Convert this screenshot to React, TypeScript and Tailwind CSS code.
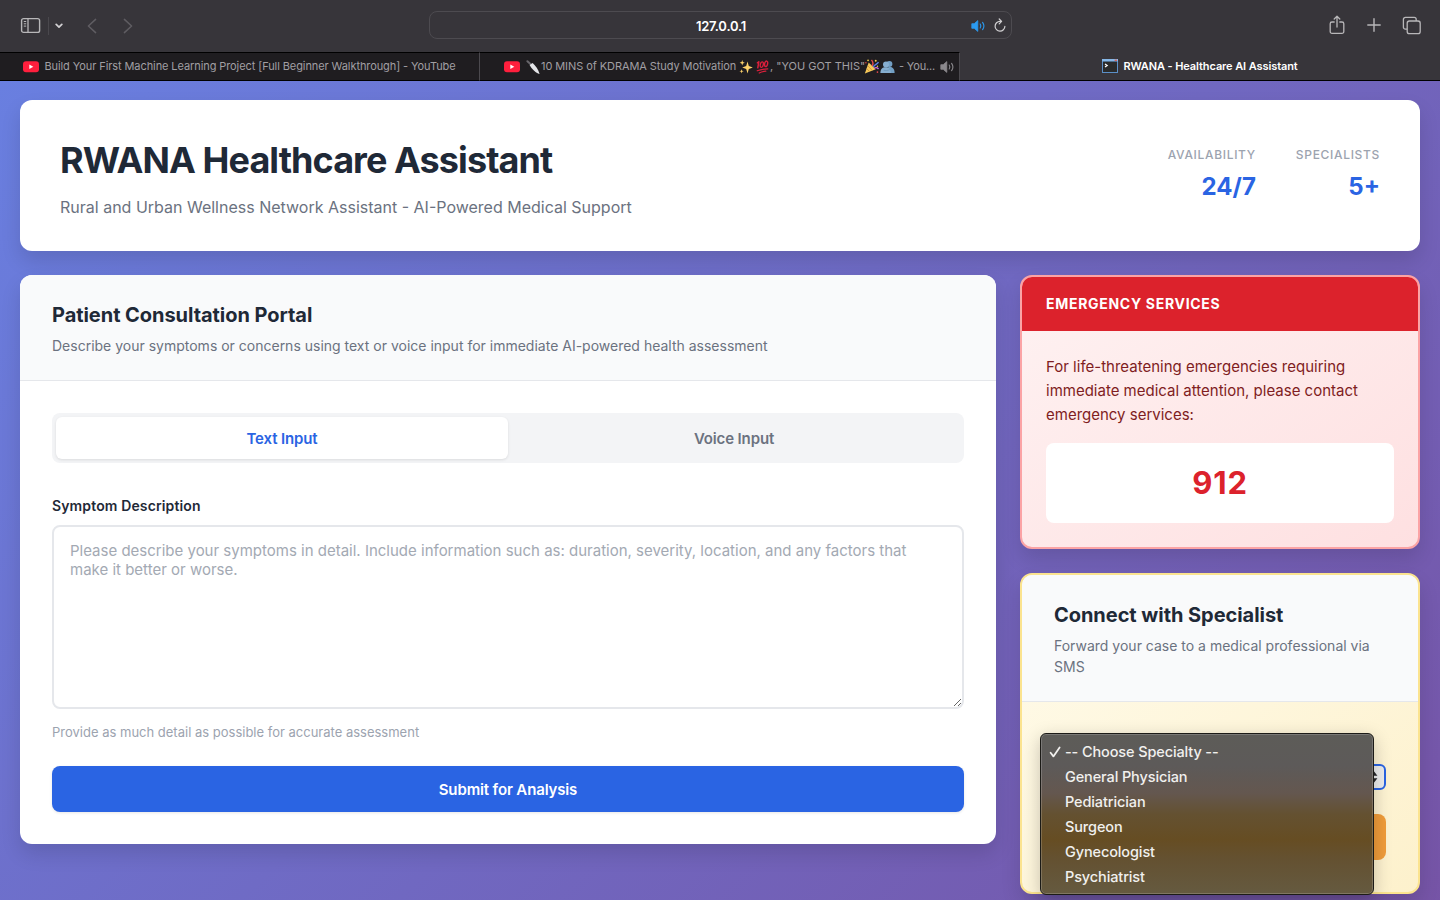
import React from "react";

const specialties = [
  "-- Choose Specialty --",
  "General Physician",
  "Pediatrician",
  "Surgeon",
  "Gynecologist",
  "Psychiatrist",
];

function YouTubeIcon() {
  return (
    <svg width="16" height="12" viewBox="0 0 16 12" className="shrink-0">
      <rect width="16" height="11" y="0.3" rx="3" fill="#ff1f3d" />
      <path d="M6.3 3.6v4.4l4-2.2z" fill="#fff" />
    </svg>
  );
}

function Knife() {
  return (
    <svg width="14" height="14" viewBox="0 0 14 14" className="shrink-0">
      <path d="M1.4 1.2 5 4.6" stroke="#68666b" strokeWidth="2" strokeLinecap="round" />
      <path d="M3.6 5 6.6 3C9.5 5.600 12.400 9.500 13.600 13.900 9.500 13 5.800 9 3.600 5Z" fill="#e4e5e8" />
    </svg>
  );
}

function Sparkles() {
  return (
    <svg width="14" height="14" viewBox="0 0 13 13" className="shrink-0" fill="#fdd26a">
      <path d="M7.9 1.4 9.1 5.6 12.8 7 9.1 8.4 7.9 12.6 6.7 8.4 3 7 6.7 5.6Z" />
      <path d="M3 0 3.6 1.9 5.4 2.6 3.6 3.3 3 5.2 2.4 3.3.6 2.6 2.4 1.9Z" />
      <path d="M2.4 8.6 2.9 10 4.4 10.5 2.9 11 2.4 12.6 1.9 11 .4 10.5 1.9 10Z" />
    </svg>
  );
}

function Hundred() {
  return (
    <svg width="13" height="14" viewBox="0 0 13 14" className="shrink-0" fill="none" stroke="#dc1f3c" strokeLinecap="round">
      <path d="M2.8 1.8 1.8 7.8M1.4 2.8l1.4-1" strokeWidth="1.5" />
      <ellipse cx="5.8" cy="4.6" rx="1.5" ry="2.8" strokeWidth="1.4" transform="rotate(12 5.8 4.6)" />
      <ellipse cx="10.1" cy="3.8" rx="1.5" ry="2.8" strokeWidth="1.4" transform="rotate(12 10.1 3.8)" />
      <path d="M1.2 10.8C4.5 9.4 8 8.8 11.8 8.8M3.2 13c2-1 4.2-1.7 6.6-1.9" strokeWidth="1.2" />
    </svg>
  );
}

function Party() {
  return (
    <svg width="16" height="15" viewBox="0 0 15 14" className="shrink-0">
      <path d="M4.4 3.2 11 9.6 0.8 13.6Z" fill="#f7c95a" />
      <path d="M3.6 6.4 7.6 10.6M2.6 9 5 11.6" stroke="#d0933a" strokeWidth="0.8" />
      <path d="M7.4 6.4C8.8 5 8.4 2.6 7 .8" stroke="#e5484d" strokeWidth="1.3" fill="none" />
      <path d="M8.8 7.4C10 5 12.2 5.2 13.6 3" stroke="#5b7fe8" strokeWidth="1.3" fill="none" />
      <path d="M9.6 8.6c1.4-1 3-.6 4 .8" stroke="#c66be0" strokeWidth="1.2" fill="none" />
      <g fill="#f5d04c">
        <circle cx="11" cy="1.6" r="0.9" />
        <circle cx="3.8" cy="1.2" r="0.8" />
        <circle cx="12.6" cy="6.8" r="0.7" />
      </g>
      <circle cx="12.6" cy="12.2" r="0.8" fill="#e5484d" />
      <circle cx="1.8" cy="3.4" r="0.7" fill="#e5484d" />
    </svg>
  );
}

function Hugging() {
  return (
    <svg width="15" height="14" viewBox="0 0 15 14" className="shrink-0">
      <circle cx="9.4" cy="4" r="3" fill="#729fc4" />
      <path d="M6 13c0-4.4 1.4-6 4.2-6s4.4 2.4 4.4 6Z" fill="#729fc4" />
      <circle cx="6" cy="4.4" r="3" fill="#86aed0" />
      <path d="M.4 13c0-3.8 1.8-5.8 5.2-5.8S10.4 9.2 11 13Z" fill="#86aed0" />
      <path d="M3.6 10.2c2 .6 4.2.4 6.2-.6" stroke="#6390b4" strokeWidth="0.7" fill="none" />
    </svg>
  );
}

function Speaker({ className }: { className: string }) {
  return (
    <svg width="15" height="14" viewBox="0 0 15 14" className={className}>
      <path d="M.8 4.7h2.4L6.8 1.6v10.8L3.2 9.3H.8z" fill="currentColor" stroke="currentColor" strokeWidth="0.8" strokeLinejoin="round" />
      <path d="M9.2 5c.8 1.2.8 2.8 0 4M11.6 3.4c1.6 2.2 1.6 5 0 7.2" fill="none" stroke="currentColor" strokeWidth="1.1" strokeLinecap="round" />
    </svg>
  );
}

function TerminalIcon() {
  return (
    <svg width="16" height="14" viewBox="0 0 16 14" className="shrink-0">
      <rect width="16" height="14" rx="0.6" fill="#5b8fc7" />
      <rect width="16" height="2.4" fill="#86b7e6" />
      <rect x="12.6" y="0.6" width="2.4" height="1.2" fill="#e2574c" />
      <rect x="1" y="2.6" width="14" height="10.4" fill="#2a2b2b" />
      <path d="M3 5 5.2 6.5 3 8" stroke="#fff" strokeWidth="1.2" fill="none" />
    </svg>
  );
}

function Toolbar() {
  return (
    <div className="grid h-[52px] grid-cols-[429px_583px_1fr] items-center bg-[#37353a]">
      <div className="flex items-center pl-5">
        <svg width="21" height="17" viewBox="0 0 21 17" className="mb-px" fill="none" stroke="#b8b7b9">
          <rect x="1.6" y="1.6" width="18" height="13.8" rx="2" strokeWidth="1.4" />
          <path d="M8 1.6v13.8" strokeWidth="1.3" />
          <path d="M3.8 4.5h2.4M3.8 6.8h2.4M3.8 9.1h2.4" strokeWidth="1" />
        </svg>
        <span className="ml-[7px] h-[18px] w-px bg-[#4a484d]" />
        <svg width="8" height="6" viewBox="0 0 8 6" className="ml-[6px]" fill="none" stroke="#d2d1d3" strokeWidth="1.7" strokeLinecap="round" strokeLinejoin="round">
          <path d="M1.2 1.4 4 4.2l2.8-2.8" />
        </svg>
        <svg width="10" height="16" viewBox="0 0 10 16" className="ml-6" fill="none" stroke="#5f5d62" strokeWidth="1.5" strokeLinecap="round" strokeLinejoin="round">
          <path d="M8.6 1.4 1.4 8l7.2 6.6" />
        </svg>
        <svg width="10" height="16" viewBox="0 0 10 16" className="ml-[26px]" fill="none" stroke="#5f5d62" strokeWidth="1.5" strokeLinecap="round" strokeLinejoin="round">
          <path d="M1.4 1.4 8.6 8l-7.2 6.6" />
        </svg>
      </div>
      <div className="mb-[2px] flex h-7 items-center rounded-lg border border-[#4d4b50] pr-[4px] pl-[5px]">
        <div className="w-[36px]" />
        <div className="flex-1 pt-[3px] text-center text-[13px] font-semibold tracking-[-0.2px] text-white">127.0.0.1</div>
        <Speaker className="mt-px mr-[8px] text-[#2b9bf0]" />
        <svg width="13" height="15" viewBox="0 0 13 15" className="mt-px" fill="none" stroke="#d2d1d3" strokeWidth="1.2" strokeLinecap="round" strokeLinejoin="round">
          <path d="M6.6 3.3H6a4.9 4.9 0 1 0 4.9 5" />
          <path d="M5.2 1 7.6 3.4 5.2 5.8" />
        </svg>
      </div>
      <div className="flex items-center justify-end pr-[19px] text-[#b8b7b9]">
        <svg width="16" height="20" viewBox="0 0 16 20" className="mb-[3px]" fill="none" stroke="currentColor" strokeWidth="1.3" strokeLinecap="round" strokeLinejoin="round">
          <path d="M5.2 7H3a1.8 1.8 0 0 0-1.8 1.8v7.8A1.8 1.8 0 0 0 3 18.4h10a1.8 1.8 0 0 0 1.8-1.8V8.8A1.8 1.8 0 0 0 13 7h-2.2M8 12V1.4M5.2 4 8 1.2 10.8 4" />
        </svg>
        <svg width="14" height="14" viewBox="0 0 14 14" className="mb-[2px] ml-[22px]" stroke="currentColor" strokeWidth="1.4" strokeLinecap="round">
          <path d="M7 .8v12.4M.8 7h12.4" />
        </svg>
        <svg width="19" height="19" viewBox="0 0 19 19" className="mb-[2px] ml-[21px]" fill="none" stroke="currentColor" strokeWidth="1.3">
          <rect x="5.2" y="5" width="13" height="12.6" rx="2.2" />
          <path d="M5.2 13.2H3.4a2 2 0 0 1-2-2V3.4a2 2 0 0 1 2-2h8.8a2 2 0 0 1 2 2V5" />
        </svg>
      </div>
    </div>
  );
}

function TabStrip() {
  return (
    <div className="flex h-[29px] text-[11px] text-[#a19fa3]">
      <div className="flex w-[480px] items-center justify-center gap-[5px] border-y border-r border-y-black border-r-[#4b494e] bg-[#1f1d20] whitespace-nowrap">
        <YouTubeIcon />
        <span className="tracking-[-0.09px]">Build Your First Machine Learning Project [Full Beginner Walkthrough] - YouTube</span>
      </div>
      <div className="flex w-[480px] items-center border-y border-r border-y-black border-r-[#4b494e] bg-[#1f1d20] pl-6 whitespace-nowrap">
        <YouTubeIcon />
        <span className="ml-[6px] flex items-center">
          <Knife />
          <span className="ml-px w-[198px] tracking-[-0.08px]">10 MINS of KDRAMA Study Motivation</span>
          <Sparkles />
          <span className="ml-[3px]"><Hundred /></span>
          <span className="ml-px">, "YOU GOT THIS"</span>
          <span className="-ml-px"><Party /></span>
          <Hugging />
          <span className="ml-[4px] tracking-[-0.2px]">- You...</span>
        </span>
        <Speaker className="ml-[5px] shrink-0 text-[#8b898d]" />
      </div>
      <div className="flex flex-1 items-center justify-center gap-[5px] border-b border-black bg-[#37353a] font-semibold text-white">
        <TerminalIcon />
        <span className="tracking-[-0.1px]">RWANA - Healthcare AI Assistant</span>
      </div>
    </div>
  );
}

function Stat({ label, value }: { label: string; value: string }) {
  return (
    <div className="text-right">
      <div className="text-xs leading-[18px] font-medium tracking-[0.68px] text-[#9ca3af] uppercase">{label}</div>
      <div className="mt-[5px] text-2xl leading-9 font-bold text-[#2a64e3]">{value}</div>
    </div>
  );
}

function ConsultationCard() {
  return (
    <section className="w-[976px] overflow-hidden rounded-xl bg-white shadow-[0_10px_20px_rgba(0,0,0,0.12)]">
      <div className="h-[106px] border-b border-[#e5e7eb] bg-[#f9fafb] px-8 pt-[25px]">
        <h2 className="text-xl leading-[30px] font-bold tracking-[-0.05px] text-[#1f2937]">Patient Consultation Portal</h2>
        <p className="mt-[5px] text-sm leading-[22px] text-[#6b7280]">
          Describe your symptoms or concerns using text or voice input for immediate AI-powered health assessment
        </p>
      </div>
      <div className="px-8 pt-8 pb-8">
        <div className="flex h-[50px] rounded-lg bg-[#f3f4f6] p-1 text-[15px] font-semibold tracking-[-0.13px]">
          <button className="flex-1 rounded-md bg-white pt-[2px] text-[#2a64e3] shadow-[0_1px_3px_rgba(0,0,0,0.1)]">Text Input</button>
          <button className="flex-1 rounded-md pt-[2px] text-[#6b7280]">Voice Input</button>
        </div>
        <label className="mt-8 block text-sm leading-[22px] font-semibold tracking-[0.13px] text-[#1f2937]">Symptom Description</label>
        <textarea
          className="mt-2 block h-[184px] w-full resize-y rounded-lg border-2 border-[#e5e7eb] bg-white px-4 py-[14px] text-[15px] leading-[19px] placeholder:text-[#a3a9b3]"
          placeholder="Please describe your symptoms in detail. Include information such as: duration, severity, location, and any factors that make it better or worse."
        />
        <p className="mt-3 text-[13px] leading-[22px] text-[#9ca3af]">Provide as much detail as possible for accurate assessment</p>
        <button className="mt-[23px] block h-[46px] w-full rounded-lg bg-[#2a64e3] pt-[2px] text-[15px] font-semibold tracking-[-0.14px] text-white shadow-[0_1px_3px_rgba(0,0,0,0.1)]">Submit for Analysis</button>
      </div>
    </section>
  );
}

function EmergencyCard() {
  return (
    <section className="h-[274px] overflow-hidden rounded-xl border-2 border-[#fba3a5] bg-linear-to-br from-[#fef2f2] to-[#fee0e1] shadow-[0_10px_20px_rgba(0,0,0,0.12)]">
      <div className="flex h-[54px] items-center bg-[#dc222c] px-6 text-sm font-bold tracking-[0.7px] text-white uppercase">Emergency Services</div>
      <div className="px-6 pt-6">
        <p className="text-[15px] leading-6 text-[#7f1d22]">
          For life-threatening emergencies requiring immediate medical attention, please contact emergency services:
        </p>
        <div className="mt-4 flex h-20 items-center justify-center rounded-lg bg-white pt-px text-[31px] font-bold tracking-[0.8px] text-[#dc222c]">912</div>
      </div>
    </section>
  );
}

function SpecialistCard() {
  return (
    <section className="relative h-[321px]">
      <div className="h-full overflow-hidden rounded-xl border-2 border-[#fbe38f] bg-linear-to-br from-[#fffbeb] to-[#fdf1cc] shadow-[0_10px_20px_rgba(0,0,0,0.12)]">
        <div className="h-[127px] border-b border-[#e5e7eb] bg-[#f9fafb] px-8 pt-[25px]">
          <h2 className="text-xl leading-[30px] font-bold tracking-[-0.05px] text-[#1f2937]">Connect with Specialist</h2>
          <p className="mt-[5px] text-sm leading-[21px] text-[#6b7280]">Forward your case to a medical professional via SMS</p>
        </div>
        <div className="px-8 pt-[62px]">
          <div className="flex h-[26px] items-center justify-end rounded-md border-2 border-[#2a64e3] bg-[#ededed] pr-[6px]">
            <svg width="10" height="14" viewBox="0 0 10 14" fill="#27272a">
              <path d="M5 0 9.4 5.8H.6zM5 14 .6 8.2h8.800z" />
            </svg>
          </div>
          <div className="mt-6 h-[46px] rounded-lg bg-[#f09c3a]" />
        </div>
      </div>
      <div className="absolute top-[160px] left-5 h-[162px] w-[334px] rounded-md border border-[#1c1b17] bg-[linear-gradient(180deg,#5d5c58_0%,#5d5a59_20%,#64574f_37%,#645131_50%,#664d23_66%,#645131_78%,#655a40_100%)] pt-[5px] shadow-[0_5px_18px_rgba(0,0,0,0.22),inset_0_0_0_1px_rgba(255,255,255,0.18)]">
        {specialties.map((name, i) => (
          <div key={name} className="flex h-[25px] items-center pl-[7px] text-[14.5px] font-medium tracking-[-0.12px] text-[#f1f0ee]">
            <span className="flex w-[17px] items-center">
              {i === 0 && (
                <svg width="13" height="12" viewBox="0 0 13 12" fill="none" stroke="#f1f0ee" strokeWidth="1.8" strokeLinecap="round" strokeLinejoin="round">
                  <path d="M2.600 6.8 5.400 10.4 11.600 1.4" />
                </svg>
              )}
            </span>
            {name}
          </div>
        ))}
      </div>
    </section>
  );
}

export default function App() {
  return (
    <div className="h-[900px] w-[1440px] overflow-hidden font-['Inter',sans-serif]">
      <Toolbar />
      <TabStrip />
      <main className="h-[833px] bg-[linear-gradient(135deg,#697fe0_0%,#7654a6_100%)] px-5 pt-[19px]">
        <header className="flex h-[151px] justify-between rounded-xl bg-white px-10 pt-10 shadow-[0_10px_20px_rgba(0,0,0,0.12)]">
          <div>
            <h1 className="text-4xl leading-10 font-bold tracking-[-0.93px] text-[#1f2937]">RWANA Healthcare Assistant</h1>
            <p className="mt-[15px] text-base leading-6 text-[#6b7280]">
              Rural and Urban Wellness Network Assistant - AI-Powered Medical Support
            </p>
          </div>
          <div className="mt-[6px] flex gap-10">
            <Stat label="Availability" value="24/7" />
            <Stat label="Specialists" value="5+" />
          </div>
        </header>
        <div className="mt-6 flex items-start gap-6">
          <ConsultationCard />
          <div className="flex w-[400px] flex-col gap-6">
            <EmergencyCard />
            <SpecialistCard />
          </div>
        </div>
      </main>
    </div>
  );
}
